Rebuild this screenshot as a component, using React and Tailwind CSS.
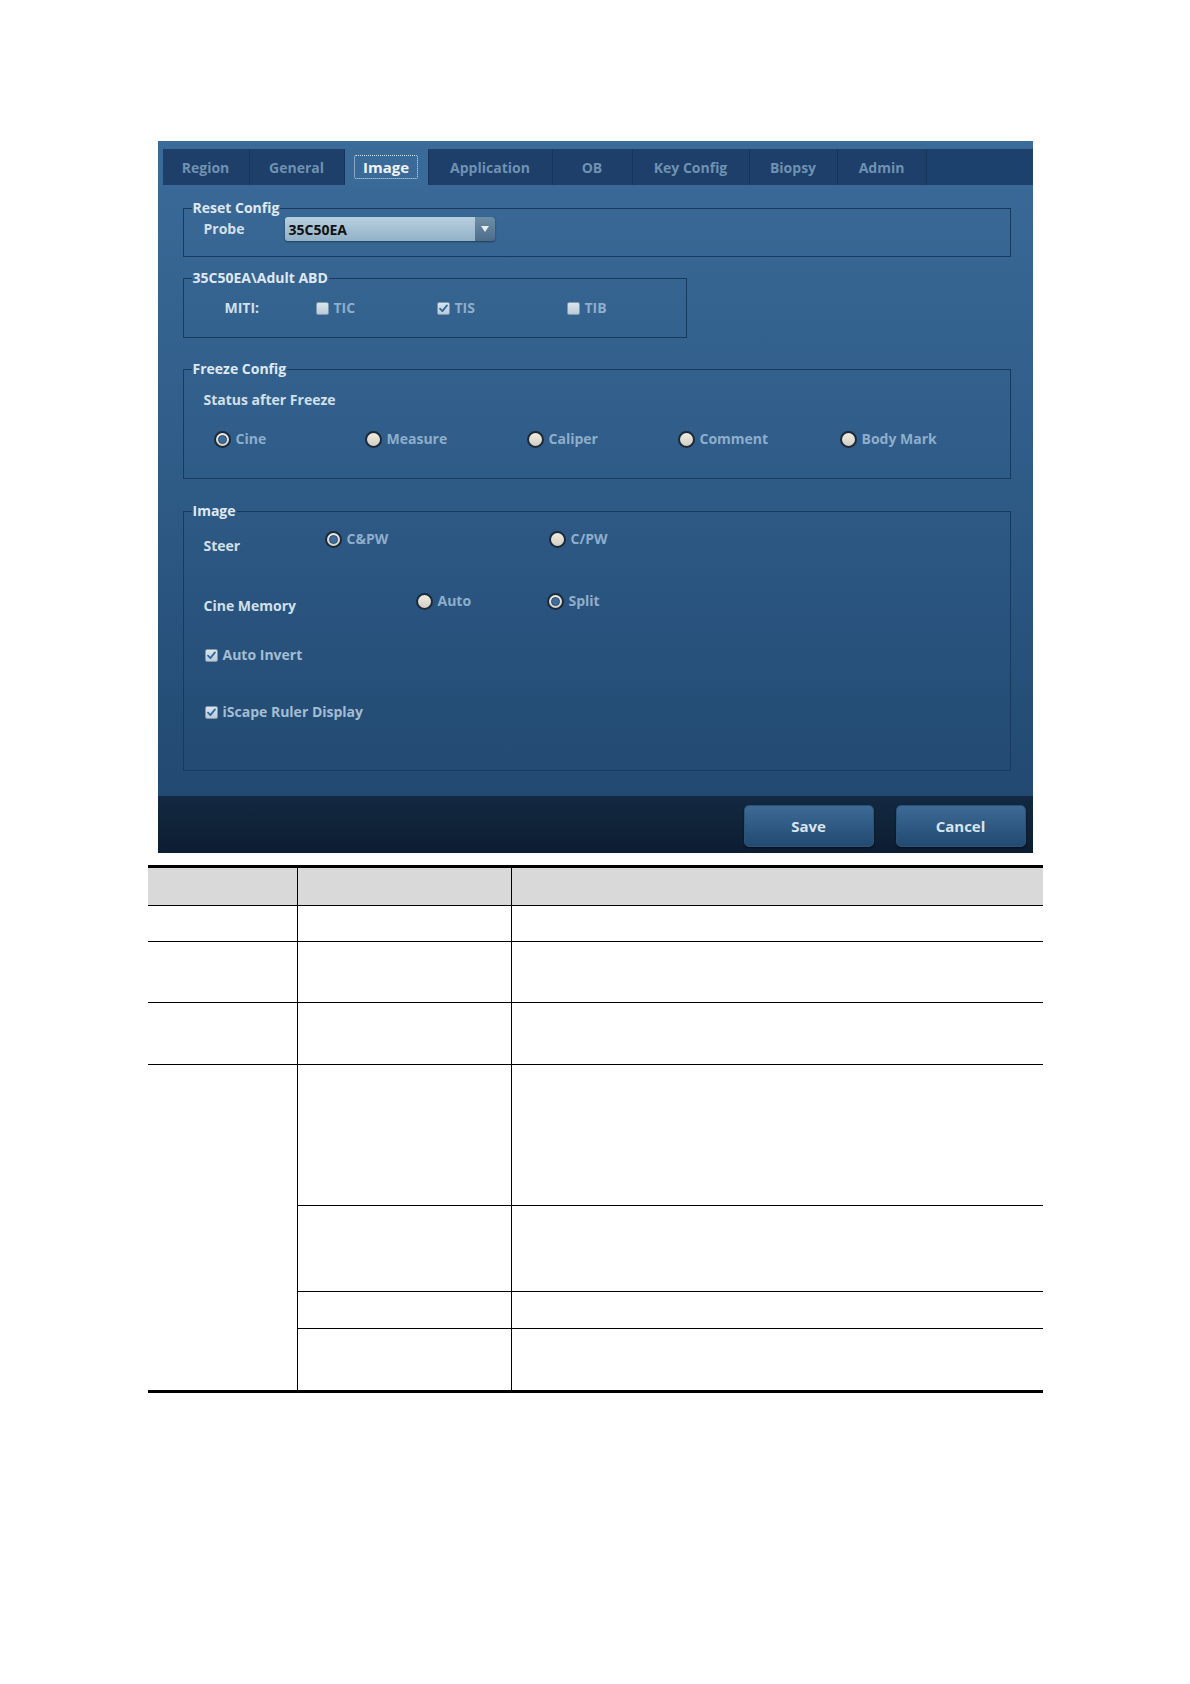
import React from 'react';

const TABS = [
  { label: 'Region', w: 'w-[87px]' },
  { label: 'General', w: 'w-[95px]' },
  { label: 'Image', w: 'w-[84px]', active: true },
  { label: 'Application', w: 'w-[124px]' },
  { label: 'OB', w: 'w-[80px]' },
  { label: 'Key Config', w: 'w-[117px]' },
  { label: 'Biopsy', w: 'w-[88px]' },
  { label: 'Admin', w: 'w-[89px]' },
];

const Check = ({ checked }) => (
  <span className="relative w-[13px] h-[13px] shrink-0 rounded-[2px] border border-[#7f98ab] bg-gradient-to-b from-[#dbe5ec] to-[#b9cbd8]">
    {checked && (
      <svg viewBox="0 0 12 12" className="absolute inset-0 w-[11px] h-[11px]">
        <path d="M2.2 6.2 L4.8 8.8 L9.8 2.6" fill="none" stroke="#2f6aa3" strokeWidth="2" strokeLinecap="round" strokeLinejoin="round" />
      </svg>
    )}
  </span>
);

const Radio = ({ selected }) => (
  <span className="w-[17px] h-[17px] shrink-0 rounded-full border-2 border-[#1a2a3b] bg-gradient-to-b from-[#f0ece2] to-[#d3cfc4] flex items-center justify-center">
    {selected && <span className="w-[9px] h-[9px] rounded-full bg-[#3f6e9c] border border-[#2a4d72]" />}
  </span>
);

const Fieldset = ({ title, className, children }) => (
  <fieldset className={`border border-[#173a60] ${className}`}>
    <legend className="ml-[8px] px-[1px] text-[14px] leading-[18px] font-bold text-[#dfe8f1]">{title}</legend>
    {children}
  </fieldset>
);

const opt = 'text-[14px] leading-[20px] font-bold text-[#8eaecb]';
const lbl = 'text-[14px] leading-[20px] font-bold text-[#d3e0ea]';

const rowHeights = ['h-[36px]', 'h-[61px]', 'h-[62px]'];

export default function App() {
  return (
    <div className="bg-white min-h-[1684px] w-[1190px] pt-[141px] font-['Open_Sans',sans-serif]">
      <div className="mx-auto w-[875px] h-[712px] flex flex-col bg-gradient-to-b from-[#3b6b99] via-[#2e5a86] to-[#1f466d]">
        <div className="pt-[8px] pl-[5px]">
          <div className="flex h-[36px] bg-[#1c416c]">
            {TABS.map(t => (
              <div
                key={t.label}
                className={`${t.w} flex items-center justify-center border-r border-[#15355a] ${t.active ? 'bg-[#3a6a98]' : 'bg-[#1d3f69]'}`}
              >
                {t.active ? (
                  <span className="px-[8px] h-[24px] flex items-center border border-dotted border-[#d7e2ec] rounded-[2px] text-[15px] font-bold text-[#eef3f8]">
                    {t.label}
                  </span>
                ) : (
                  <span className="text-[14px] font-bold text-[#6f91b2]">{t.label}</span>
                )}
              </div>
            ))}
          </div>
        </div>

        <div className="flex-1 flex flex-col pl-[25px] pr-[22px] pt-[14px]">
          <Fieldset title="Reset Config" className="h-[58px]">
            <div className="flex items-center h-[24px] pl-[20px]">
              <span className={`${lbl} w-[81px]`}>Probe</span>
              <div className="w-[210px] h-[24px] flex rounded-[3px] shadow-[0_1px_2px_rgba(0,0,0,0.4)]">
                <div className="flex-1 flex items-center pl-[4px] rounded-l-[3px] bg-gradient-to-b from-[#b8cfdf] to-[#93b2c8] text-[14px] font-bold text-[#111]">
                  35C50EA
                </div>
                <div className="w-[20px] flex items-center justify-center rounded-r-[4px] bg-gradient-to-b from-[#6f8ea7] to-[#4c6c88]">
                  <svg viewBox="0 0 8 6" className="w-[8px] h-[6px]">
                    <path d="M0 0 H8 L4 6 Z" fill="#e6edf3" />
                  </svg>
                </div>
              </div>
            </div>
          </Fieldset>

          <Fieldset title="35C50EA\Adult ABD" className="mt-[12px] w-[504px] h-[69px]">
            <div className="flex items-center h-[20px] mt-[11px] pl-[41px]">
              <span className={`${lbl} w-[91px]`}>MITI:</span>
              <div className="w-[121px] flex items-center gap-[5px]"><Check /><span className={opt}>TIC</span></div>
              <div className="w-[130px] flex items-center gap-[5px]"><Check checked /><span className={opt}>TIS</span></div>
              <div className="flex items-center gap-[5px]"><Check /><span className={opt}>TIB</span></div>
            </div>
          </Fieldset>

          <Fieldset title="Freeze Config" className="mt-[22px] h-[119px]">
            <div className={`${lbl} h-[20px] mt-[12px] pl-[20px]`}>Status after Freeze</div>
            <div className="flex items-center h-[20px] mt-[19px] pl-[30px]">
              <div className="w-[151px] flex items-center gap-[5px]"><Radio selected /><span className={opt}>Cine</span></div>
              <div className="w-[162px] flex items-center gap-[5px]"><Radio /><span className={opt}>Measure</span></div>
              <div className="w-[151px] flex items-center gap-[5px]"><Radio /><span className={opt}>Caliper</span></div>
              <div className="w-[162px] flex items-center gap-[5px]"><Radio /><span className={opt}>Comment</span></div>
              <div className="flex items-center gap-[5px]"><Radio /><span className={opt}>Body Mark</span></div>
            </div>
          </Fieldset>

          <Fieldset title="Image" className="mt-[23px] h-[269px]">
            <div className="flex items-center h-[20px] mt-[9px] pl-[20px]">
              <span className={`${lbl} w-[121px] translate-y-[7px]`}>Steer</span>
              <div className="w-[224px] flex items-center gap-[5px]"><Radio selected /><span className={opt}>C&amp;PW</span></div>
              <div className="flex items-center gap-[5px]"><Radio /><span className={opt}>C/PW</span></div>
            </div>
            <div className="flex items-center h-[20px] mt-[42px] pl-[20px]">
              <span className={`${lbl} w-[212px] translate-y-[5px]`}>Cine Memory</span>
              <div className="w-[131px] flex items-center gap-[5px]"><Radio /><span className={opt}>Auto</span></div>
              <div className="flex items-center gap-[5px]"><Radio selected /><span className={opt}>Split</span></div>
            </div>
            <div className="flex items-center gap-[5px] h-[20px] mt-[34px] pl-[21px]">
              <Check checked /><span className={`${opt} text-[#a3bdd3]`}>Auto Invert</span>
            </div>
            <div className="flex items-center gap-[5px] h-[20px] mt-[37px] pl-[21px]">
              <Check checked /><span className={`${opt} text-[#a3bdd3]`}>iScape Ruler Display</span>
            </div>
          </Fieldset>
        </div>

        <div className="h-[57px] flex justify-end gap-[22px] pt-[9px] pr-[7px] bg-gradient-to-b from-[#132941] to-[#0c1d31]">
          {['Save', 'Cancel'].map(b => (
            <button
              key={b}
              className="w-[130px] h-[42px] rounded-[5px] border border-[#2b5479] bg-gradient-to-b from-[#3d6a95] to-[#224a72] text-[15px] font-bold text-[#d8e4ee] shadow-[0_1px_2px_rgba(0,0,0,0.5)]"
            >
              {b}
            </button>
          ))}
        </div>
      </div>

      <table className="mx-auto mt-[12px] w-[895px] border-collapse table-fixed">
        <colgroup>
          <col className="w-[150px]" />
          <col className="w-[214px]" />
          <col className="w-[531px]" />
        </colgroup>
        <tbody>
          <tr className="h-[39px] bg-[#d9d9d9] border-t-[3px] border-b border-black">
            <td className="border-r border-black" />
            <td className="border-r border-black" />
            <td />
          </tr>
          {rowHeights.map((h, i) => (
            <tr key={i} className={`${h} border-b border-black`}>
              <td className="border-r border-black" />
              <td className="border-r border-black" />
              <td />
            </tr>
          ))}
          <tr className="h-[141px] border-b border-black">
            <td rowSpan={4} className="border-r border-b-[3px] border-black" />
            <td className="border-r border-black" />
            <td />
          </tr>
          <tr className="h-[86px] border-b border-black">
            <td className="border-r border-black" />
            <td />
          </tr>
          <tr className="h-[37px] border-b border-black">
            <td className="border-r border-black" />
            <td />
          </tr>
          <tr className="h-[63px] border-b-[3px] border-black">
            <td className="border-r border-black" />
            <td />
          </tr>
        </tbody>
      </table>
    </div>
  );
}
